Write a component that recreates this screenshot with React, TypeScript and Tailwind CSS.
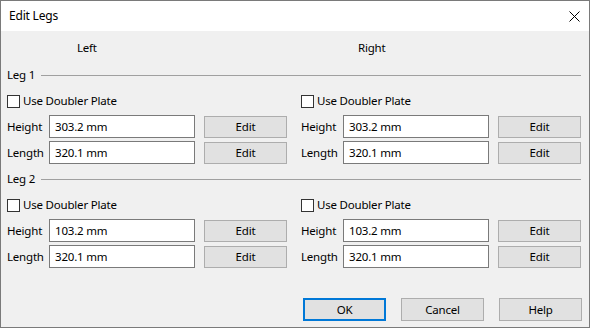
const font = { fontFamily: '"Noto Sans", "Liberation Sans", sans-serif' };

const Checkbox = ({ label }: { label: string }) => (
  <div className="flex items-center h-[24px] mt-[3px]">
    <span className="w-[13px] h-[13px] border border-[#333333] bg-white shrink-0" />
    <span className="ml-[3px]">{label}</span>
  </div>
);

const Field = ({ label, value, top }: { label: string; value: string; top: string }) => (
  <div className={`flex items-center h-[23px] ${top}`}>
    <span className="w-[42px]">{label}</span>
    <div className="w-[146px] h-[23px] border border-[#7a7a7a] bg-white flex items-center pl-[5px]">
      {value}
    </div>
    <button className="ml-[9px] w-[83px] h-[22px] border border-[#adadad] bg-[#e1e1e1]">
      Edit
    </button>
  </div>
);

const Side = ({ height, length }: { height: string; length: string }) => (
  <div className="flex flex-col w-[280px]">
    <Checkbox label="Use Doubler Plate" />
    <Field label="Height" value={height} top="mt-[2px]" />
    <Field label="Length" value={length} top="mt-[3px]" />
  </div>
);

const Leg = ({ name, left, right, top }: { name: string; left: [string, string]; right: [string, string]; top: string }) => (
  <div className={`flex flex-col ${top}`}>
    <div className="flex items-center h-[22px]">
      <span>{name}</span>
      <div className="flex-1 ml-[6px] mr-[1px] h-px bg-[#a0a0a0]" />
    </div>
    <div className="flex gap-[14px]">
      <Side height={left[0]} length={left[1]} />
      <Side height={right[0]} length={right[1]} />
    </div>
  </div>
);

export default function App() {
  return (
    <div style={font} className="w-[590px] h-[328px] border border-[#7a7a7a] bg-[#f0f0f0] flex flex-col overflow-hidden text-[11.5px] tracking-[-0.2px] text-black">
      <div className="h-[30px] bg-white flex items-center justify-between pl-[8px] pr-[9px] shrink-0">
        <span className="text-[12px]">Edit Legs</span>
        <svg width="11" height="11" viewBox="0 0 11 11">
          <path d="M0.5 0.5 L10.5 10.5 M10.5 0.5 L0.5 10.5" stroke="#000" strokeWidth="1" />
        </svg>
      </div>
      <div className="flex flex-col pl-[6px] pr-[7px]">
        <div className="flex h-[33px] items-center">
          <span className="w-[294px] pl-[70px]">Left</span>
          <span className="pl-[57px]">Right</span>
        </div>
        <Leg name="Leg 1" left={["303.2 mm", "320.1 mm"]} right={["303.2 mm", "320.1 mm"]} top="" />
        <Leg name="Leg 2" left={["103.2 mm", "320.1 mm"]} right={["103.2 mm", "320.1 mm"]} top="mt-[4px]" />
        <div className="flex justify-end gap-[15px] mt-[30px]">
          <button className="w-[83px] h-[23px] border-2 border-[#0078d7] bg-[#e1e1e1]">OK</button>
          <button className="w-[83px] h-[23px] border border-[#adadad] bg-[#e1e1e1]">Cancel</button>
          <button className="w-[83px] h-[23px] border border-[#adadad] bg-[#e1e1e1]">Help</button>
        </div>
      </div>
    </div>
  );
}
